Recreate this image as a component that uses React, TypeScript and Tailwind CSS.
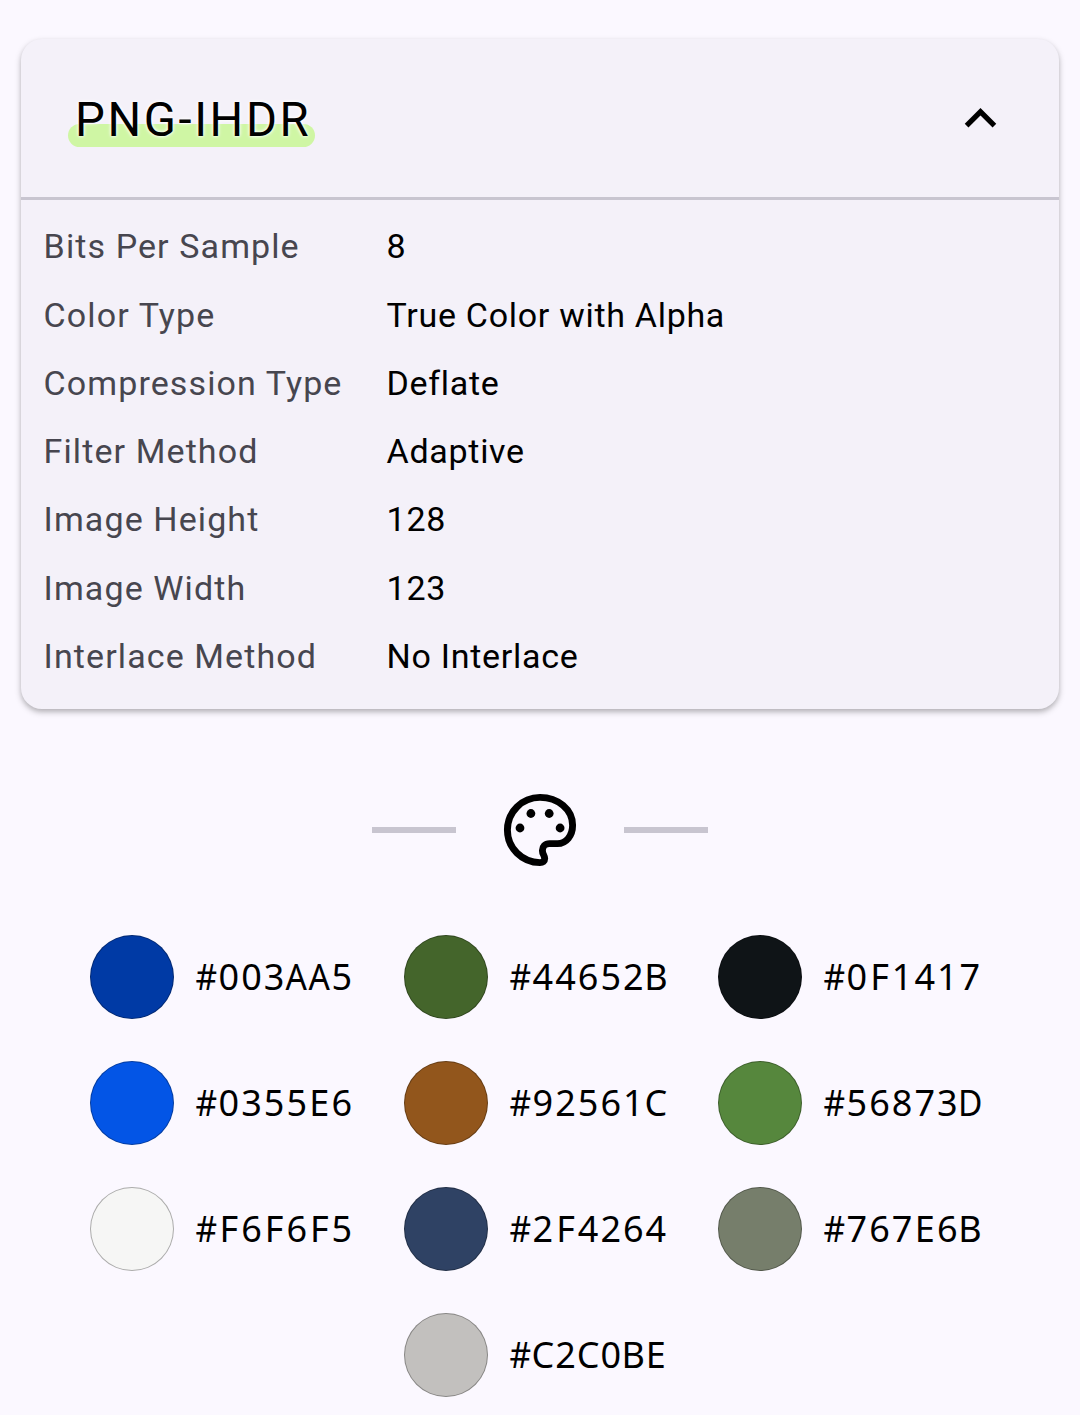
import { useState } from "react"

type Row = { label: string; value: string }

const rows: Row[] = [
  { label: "Bits Per Sample", value: "8" },
  { label: "Color Type", value: "True Color with Alpha" },
  { label: "Compression Type", value: "Deflate" },
  { label: "Filter Method", value: "Adaptive" },
  { label: "Image Height", value: "128" },
  { label: "Image Width", value: "123" },
  { label: "Interlace Method", value: "No Interlace" },
]

const colors = [
  "#003AA5",
  "#44652B",
  "#0F1417",
  "#0355E6",
  "#92561C",
  "#56873D",
  "#F6F6F5",
  "#2F4264",
  "#767E6B",
  "#C2C0BE",
]

function PaletteIcon() {
  return (
    <svg viewBox="0 0 84 84" className="h-[84px] w-[84px]" fill="none">
      <path
        d="M42 74.6A32.6 32.6 0 0 1 42 9.4C60 9.4 74.6 21.5 74.6 37.3C74.6 47.6 68.3 55.6 59.5 55.6H51.5C47 55.6 44.4 59 44.4 62.4C44.4 66.5 46.7 67.4 46.7 70.6C46.7 73.2 44.8 74.6 42 74.6Z"
        stroke="#000"
        strokeWidth="6.9"
      />
      <g fill="#000">
        <circle cx="22" cy="40" r="4.4" />
        <circle cx="32.9" cy="25.5" r="4.4" />
        <circle cx="51.2" cy="25.5" r="4.4" />
        <circle cx="62.1" cy="40" r="4.4" />
      </g>
    </svg>
  )
}

function MetadataCard({ title, rows }: { title: string; rows: Row[] }) {
  const [open, setOpen] = useState(true)

  return (
    <section className="mx-[21px] rounded-[21px] bg-[#f4f1f9] shadow-[0_3px_6px_rgba(0,0,0,0.26),0_2px_4px_rgba(0,0,0,0.06)]">
      <button
        type="button"
        onClick={() => setOpen(!open)}
        aria-expanded={open}
        className="flex h-[158px] w-full items-center justify-between px-[47px]"
      >
        <span className="relative isolate pt-1 pr-2 pl-[7px] text-[47.25px] leading-[56px] tracking-[2.6px] text-black [text-shadow:0_0_4px_#fff,0_0_3px_#fff]">
          <span className="absolute top-9 left-0 -z-10 h-[23px] w-[247px] rounded-full bg-[#cff6a4]" />
          {title}
        </span>
        <svg
          viewBox="0 0 24 24"
          className={open ? "h-[63px] w-[63px]" : "h-[63px] w-[63px] rotate-180"}
        >
          <path d="M12 8l-6 6 1.41 1.41L12 10.83l4.59 4.58L18 14z" fill="#000" />
        </svg>
      </button>
      {open && (
        <dl className="border-t-[3px] border-[#c8c5d0] pt-[12.2px] pb-[19.05px] pl-[22.6px]">
          {rows.map((row) => (
            <div key={row.label} className="flex h-[68.25px] items-center text-[34px] leading-10">
              <dt className="w-[343px] shrink-0 tracking-[1.1px] text-[#47464f]">{row.label}</dt>
              <dd className="tracking-[0.7px] text-black">{row.value}</dd>
            </div>
          ))}
        </dl>
      )}
    </section>
  )
}

function Swatch({ color }: { color: string }) {
  return (
    <div className="flex h-[84px] w-[272px] items-center gap-[21px]">
      <span
        className="h-[84px] w-[84px] shrink-0 rounded-full border border-black/30"
        style={{ backgroundColor: color }}
      />
      <span className="flex font-['Noto_Sans',sans-serif] text-[36px] leading-[42px] text-black">
        {/* one equal cell per character keeps the codes aligned between rows */}
        {color.split("").map((char, i) => (
          <span
            key={i}
            className={
              "#AD".includes(char)
                ? "flex w-[22.6px] scale-x-[0.93] justify-center"
                : "flex w-[22.6px] justify-center"
            }
          >
            {char}
          </span>
        ))}
      </span>
    </div>
  )
}

export default function App() {
  return (
    <main className="h-[1415px] overflow-hidden bg-[#fbf8ff] pt-[39px] font-[Roboto,sans-serif]">
      <MetadataCard title="PNG-IHDR" rows={rows} />

      <div className="mt-[79px] flex items-center justify-center gap-[42px]">
        <span className="h-[5.25px] w-[84px] bg-[#c8c5d0]" />
        <PaletteIcon />
        <span className="h-[5.25px] w-[84px] bg-[#c8c5d0]" />
      </div>

      <div className="mx-auto mt-[63px] flex w-[900px] flex-wrap justify-center gap-[42px]">
        {colors.map((color) => (
          <Swatch key={color} color={color} />
        ))}
      </div>
    </main>
  )
}
